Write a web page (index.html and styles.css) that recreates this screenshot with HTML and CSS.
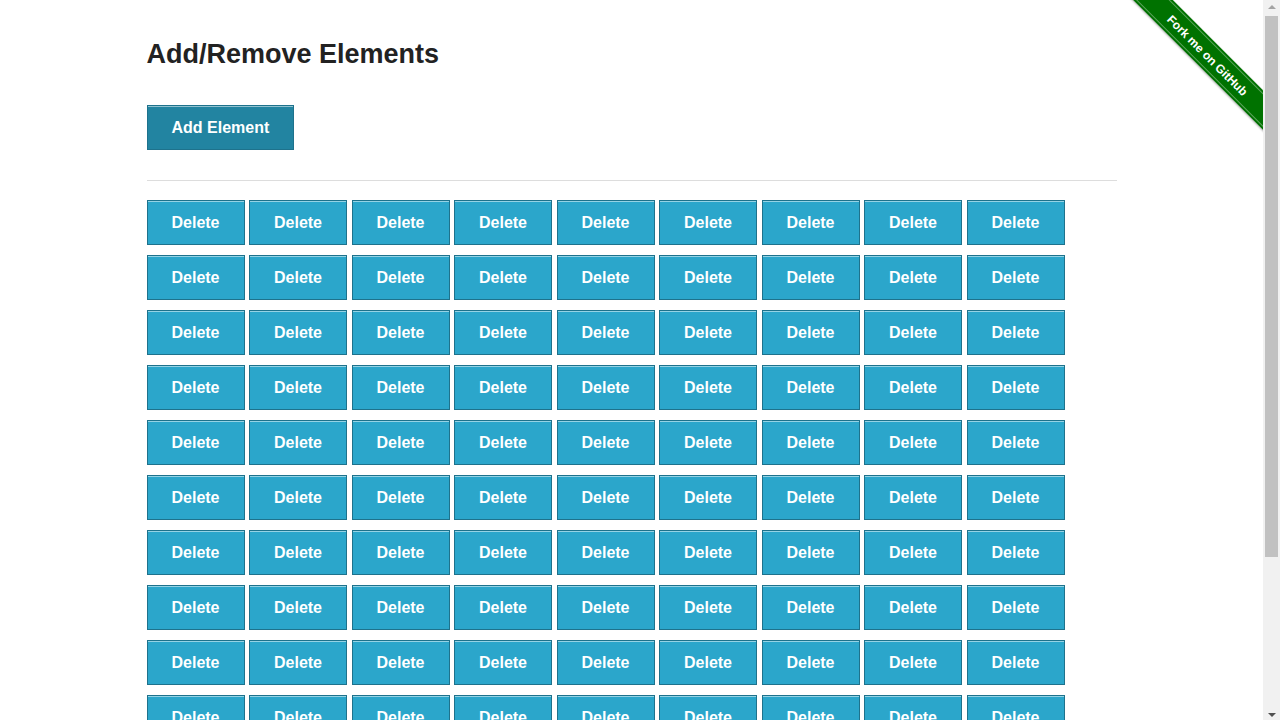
FILE: index.html
```html
<!DOCTYPE html>
<html lang="en">
<head>
<meta charset="utf-8">
<title>The Internet</title>
<link rel="stylesheet" href="styles.css">
</head>
<body>
<div class="window">
<a class="fork" href="#"><span class="fork-band"><span class="fork-text">Fork me on GitHub</span></span></a>
<div class="page">
  <div class="example">
    <h3 class="title">Add/Remove Elements</h3>
    <button class="btn btn-add">Add Element</button>
    <hr class="rule">
    <div class="elements">
      <button class="btn btn-delete">Delete</button><button class="btn btn-delete">Delete</button><button class="btn btn-delete">Delete</button><button class="btn btn-delete">Delete</button><button class="btn btn-delete">Delete</button><button class="btn btn-delete">Delete</button><button class="btn btn-delete">Delete</button><button class="btn btn-delete">Delete</button><button class="btn btn-delete">Delete</button>
      <button class="btn btn-delete">Delete</button><button class="btn btn-delete">Delete</button><button class="btn btn-delete">Delete</button><button class="btn btn-delete">Delete</button><button class="btn btn-delete">Delete</button><button class="btn btn-delete">Delete</button><button class="btn btn-delete">Delete</button><button class="btn btn-delete">Delete</button><button class="btn btn-delete">Delete</button>
      <button class="btn btn-delete">Delete</button><button class="btn btn-delete">Delete</button><button class="btn btn-delete">Delete</button><button class="btn btn-delete">Delete</button><button class="btn btn-delete">Delete</button><button class="btn btn-delete">Delete</button><button class="btn btn-delete">Delete</button><button class="btn btn-delete">Delete</button><button class="btn btn-delete">Delete</button>
      <button class="btn btn-delete">Delete</button><button class="btn btn-delete">Delete</button><button class="btn btn-delete">Delete</button><button class="btn btn-delete">Delete</button><button class="btn btn-delete">Delete</button><button class="btn btn-delete">Delete</button><button class="btn btn-delete">Delete</button><button class="btn btn-delete">Delete</button><button class="btn btn-delete">Delete</button>
      <button class="btn btn-delete">Delete</button><button class="btn btn-delete">Delete</button><button class="btn btn-delete">Delete</button><button class="btn btn-delete">Delete</button><button class="btn btn-delete">Delete</button><button class="btn btn-delete">Delete</button><button class="btn btn-delete">Delete</button><button class="btn btn-delete">Delete</button><button class="btn btn-delete">Delete</button>
      <button class="btn btn-delete">Delete</button><button class="btn btn-delete">Delete</button><button class="btn btn-delete">Delete</button><button class="btn btn-delete">Delete</button><button class="btn btn-delete">Delete</button><button class="btn btn-delete">Delete</button><button class="btn btn-delete">Delete</button><button class="btn btn-delete">Delete</button><button class="btn btn-delete">Delete</button>
      <button class="btn btn-delete">Delete</button><button class="btn btn-delete">Delete</button><button class="btn btn-delete">Delete</button><button class="btn btn-delete">Delete</button><button class="btn btn-delete">Delete</button><button class="btn btn-delete">Delete</button><button class="btn btn-delete">Delete</button><button class="btn btn-delete">Delete</button><button class="btn btn-delete">Delete</button>
      <button class="btn btn-delete">Delete</button><button class="btn btn-delete">Delete</button><button class="btn btn-delete">Delete</button><button class="btn btn-delete">Delete</button><button class="btn btn-delete">Delete</button><button class="btn btn-delete">Delete</button><button class="btn btn-delete">Delete</button><button class="btn btn-delete">Delete</button><button class="btn btn-delete">Delete</button>
      <button class="btn btn-delete">Delete</button><button class="btn btn-delete">Delete</button><button class="btn btn-delete">Delete</button><button class="btn btn-delete">Delete</button><button class="btn btn-delete">Delete</button><button class="btn btn-delete">Delete</button><button class="btn btn-delete">Delete</button><button class="btn btn-delete">Delete</button><button class="btn btn-delete">Delete</button>
      <button class="btn btn-delete">Delete</button><button class="btn btn-delete">Delete</button><button class="btn btn-delete">Delete</button><button class="btn btn-delete">Delete</button><button class="btn btn-delete">Delete</button><button class="btn btn-delete">Delete</button><button class="btn btn-delete">Delete</button><button class="btn btn-delete">Delete</button><button class="btn btn-delete">Delete</button>
      <button class="btn btn-delete">Delete</button><button class="btn btn-delete">Delete</button><button class="btn btn-delete">Delete</button><button class="btn btn-delete">Delete</button><button class="btn btn-delete">Delete</button><button class="btn btn-delete">Delete</button><button class="btn btn-delete">Delete</button><button class="btn btn-delete">Delete</button><button class="btn btn-delete">Delete</button>
      <button class="btn btn-delete">Delete</button><button class="btn btn-delete">Delete</button><button class="btn btn-delete">Delete</button><button class="btn btn-delete">Delete</button><button class="btn btn-delete">Delete</button><button class="btn btn-delete">Delete</button><button class="btn btn-delete">Delete</button><button class="btn btn-delete">Delete</button><button class="btn btn-delete">Delete</button>
    </div>
  </div>
</div>
<footer class="footer">
  <hr class="footer-rule">
  <div class="footer-text">Powered by <a class="footer-link" href="#">Elemental Selenium</a></div>
</footer>
</div>
<div class="scrollbar" aria-hidden="true">
  <span class="sb-arrow sb-up"></span>
  <span class="sb-track"><span class="sb-thumb"></span></span>
  <span class="sb-arrow sb-down"></span>
</div>
</body>
</html>
```

FILE: styles.css
```css
html, body {
  margin: 0;
  padding: 0;
}

body {
  font-family: "Liberation Sans", Arial, Helvetica, sans-serif;
  color: #222;
  background: #fff;
  overflow-x: hidden;
}

.window {
  position: relative;
  margin-right: 17px;
}

.page {
  max-width: 970px;
  margin: 0 auto;
  padding-top: 36px;
}

.title {
  font-size: 27px;
  line-height: 1.4;
  font-weight: bold;
  margin: 0 0 31px;
  color: #222;
}

.btn {
  display: block;
  box-sizing: border-box;
  height: 45px;
  padding: 2px 24px 0;
  margin: 0;
  border: 1px solid #1e728c;
  background: #2ba6cb;
  color: #fff;
  font: bold 16px "Liberation Sans", Arial, Helvetica, sans-serif;
  box-shadow: inset 0 1px 0 rgba(255, 255, 255, 0.5);
  cursor: pointer;
}

.btn-add {
  background: #2284a1;
  border-color: #1e728c;
}

.rule {
  border: 0;
  border-top: 1px solid #ddd;
  height: 0;
  margin: 30px 0 19px;
}

.elements {
  display: flex;
  flex-wrap: wrap;
  gap: 10px 4.5px;
}

.btn-delete {
  width: 98px;
  padding: 2px 0 0;
}

.footer {
  width: 303px;
  margin: 10px auto 0;
  padding: 0 15px;
  font-size: 16px;
}

.footer-rule {
  border: 0;
  border-top: 1px solid #ddd;
  height: 0;
  margin: 20px 0 19px;
}

.footer-text {
  text-align: center;
  line-height: 1.5;
  padding-bottom: 8px;
}

.footer-link {
  color: #2ba6cb;
  text-decoration: none;
}

/* Fork ribbon */
.fork {
  position: absolute;
  top: 0;
  right: 0;
  width: 149px;
  height: 149px;
  overflow: hidden;
  text-decoration: none;
  z-index: 10;
}

.fork-band {
  position: absolute;
  left: -16px;
  top: 41px;
  width: 220px;
  height: 28px;
  background: #007200;
  transform: rotate(45deg);
  box-shadow: 0 1px 2px rgba(0, 0, 0, 0.3);
}

.fork-text {
  position: absolute;
  left: 0;
  right: 0;
  top: 2px;
  bottom: 2px;
  border-top: 1px solid rgba(255, 255, 255, 0.35);
  border-bottom: 1px solid rgba(255, 255, 255, 0.35);
  color: #fff;
  font: bold 12px/23px "Liberation Sans", Arial, sans-serif;
  text-align: center;
  padding-top: 1px;
  box-sizing: border-box;
}

/* Fake classic scrollbar */
.scrollbar {
  position: fixed;
  top: 0;
  right: 0;
  width: 17px;
  height: 100vh;
  background: #f1f1f1;
  display: flex;
  flex-direction: column;
  align-items: center;
  z-index: 20;
}

.sb-arrow {
  flex: 0 0 15px;
  width: 17px;
  position: relative;
}

.sb-arrow::after {
  content: "";
  position: absolute;
  left: 5px;
  width: 0;
  height: 0;
  border-left: 4px solid transparent;
  border-right: 4px solid transparent;
}

.sb-up::after {
  top: 5px;
  border-bottom: 4px solid #a3a3a3;
}

.sb-down::after {
  top: 8px;
  border-top: 4px solid #505050;
}

.sb-track {
  flex: 1;
  width: 17px;
  display: flex;
  justify-content: center;
  padding-top: 1px;
}

.sb-thumb {
  width: 13px;
  height: 541px;
  background: #c1c1c1;
}
```
